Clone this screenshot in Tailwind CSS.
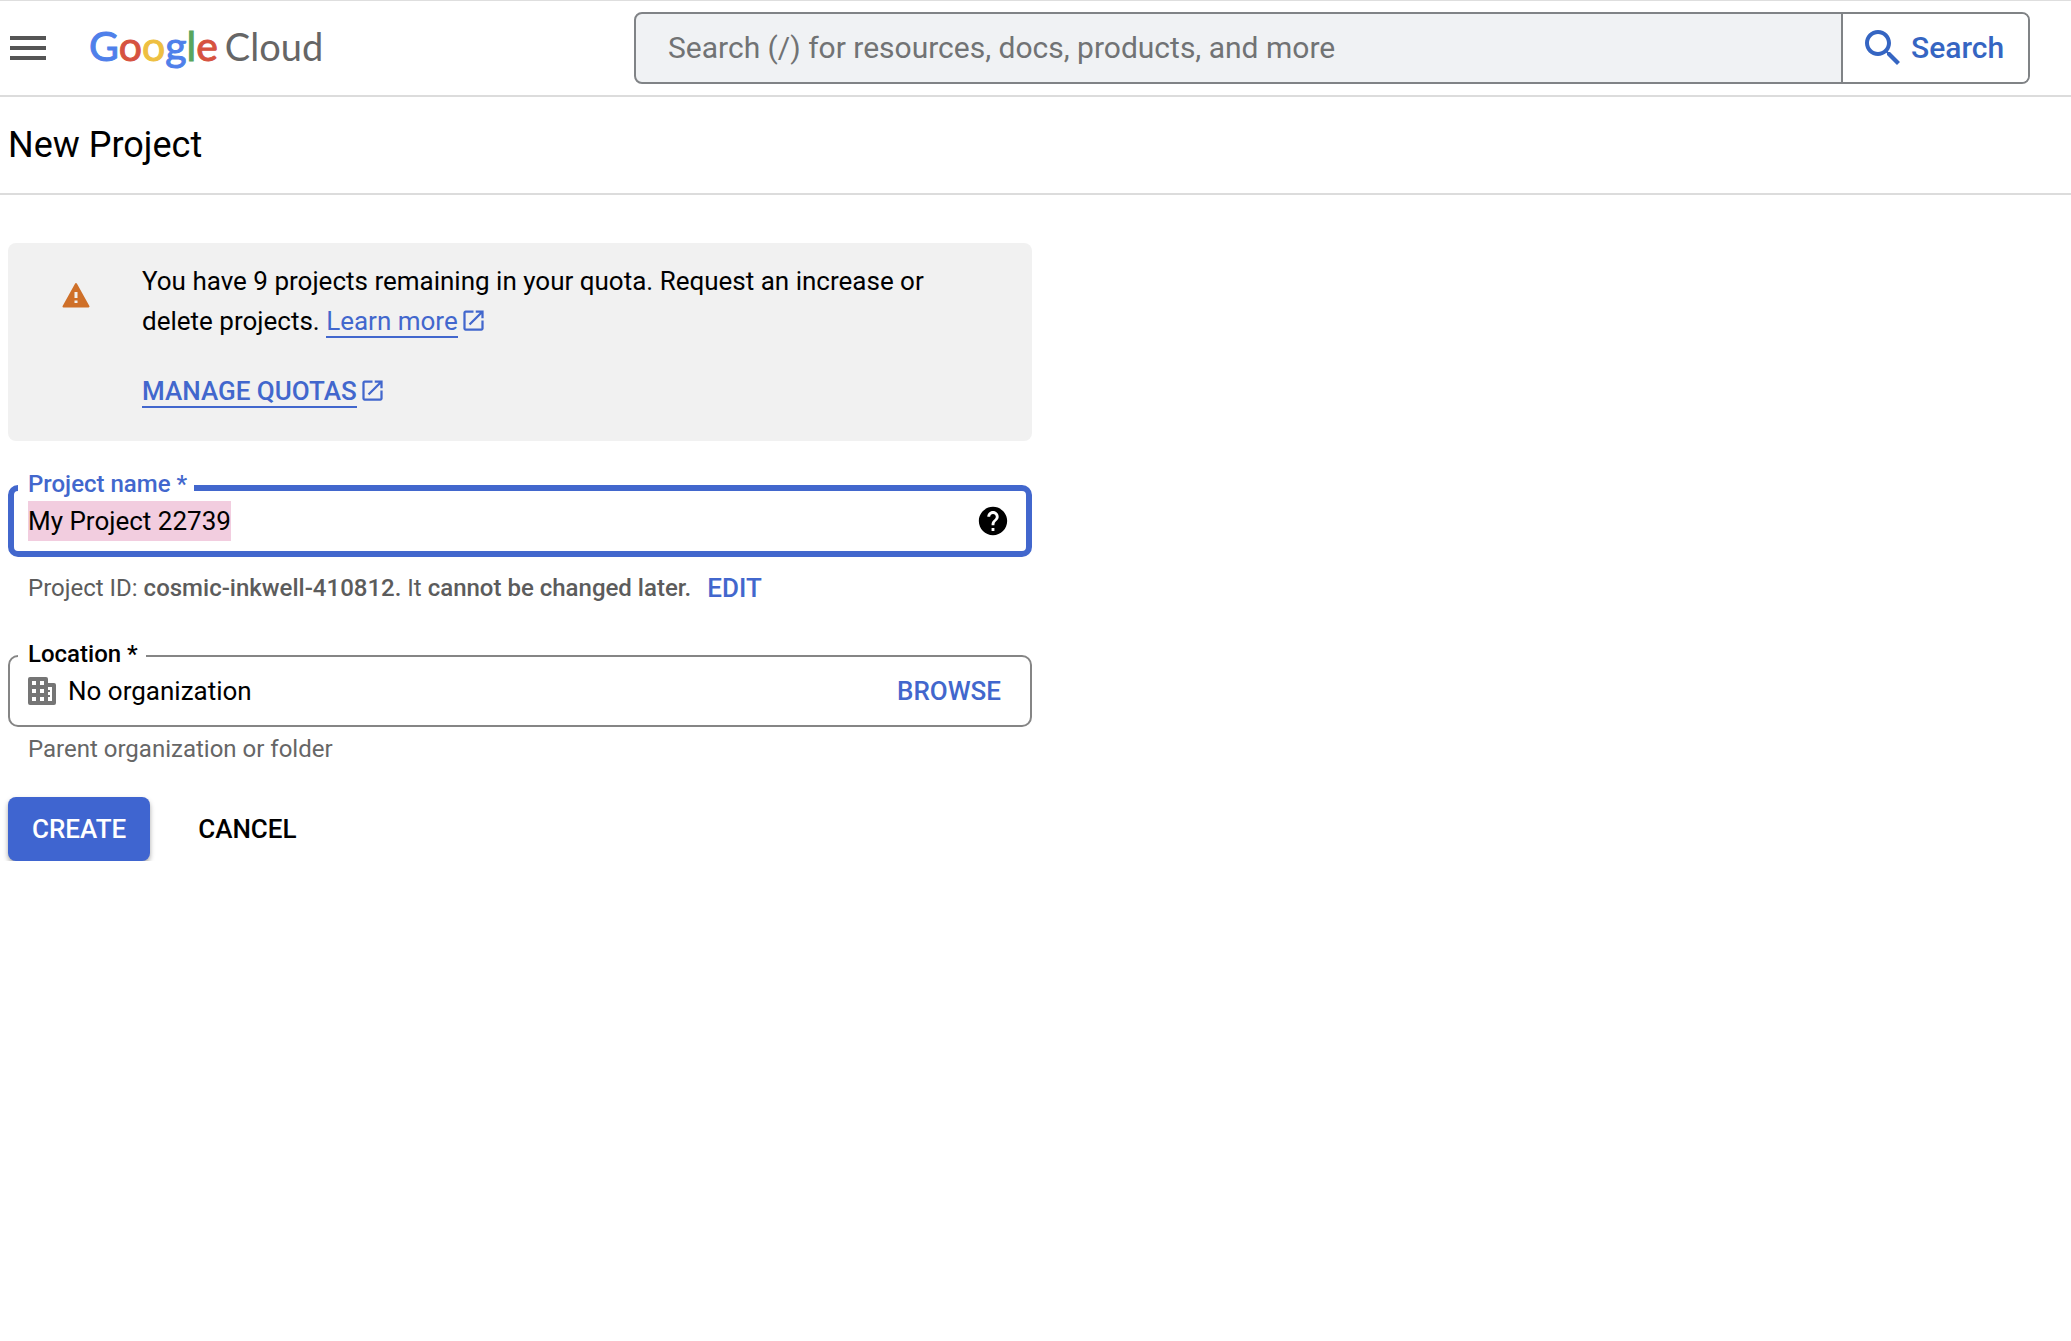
<!DOCTYPE html>
<html lang="en">
  <head>
    <meta charset="UTF-8" />
    <meta name="viewport" content="width=device-width, initial-scale=1.0" />
    <title>New Project – Google Cloud</title>
    <script src="https://cdn.jsdelivr.net/npm/@tailwindcss/browser@4"></script>
  </head>

  <body class="bg-white font-[Roboto,sans-serif] text-[26px] leading-10 text-black">
    <!-- Top bar -->
    <header
      class="flex h-[97px] items-center border-t border-b-2 border-t-[#dedede] border-b-[#dcdcdc] pr-[41px] pl-1"
    >
      <button type="button" aria-label="Navigation menu" class="shrink-0">
        <svg class="size-12" viewBox="0 0 24 24" fill="#555555">
          <path d="M3 18h18v-2H3v2zm0-5h18v-2H3v2zm0-7v2h18V6H3z" />
        </svg>
      </button>
      <a
        href="#"
        class="ml-[37px] flex shrink-0 items-baseline gap-[7px] pb-1 font-[Lato,sans-serif] text-[41px] leading-[48px]"
      >
        <span class="[-webkit-text-stroke:1px]"
          ><span class="text-[#4f80ea]">G</span
          ><span class="text-[#d65240]">o</span
          ><span class="text-[#eebf41]">o</span
          ><span class="text-[#4f80ea]">g</span
          ><span class="text-[#58a65c]">l</span
          ><span class="text-[#d65240]">e</span></span
        >
        <span class="text-[38px] text-[#666666]">Cloud</span>
      </a>

      <form
        class="ml-auto flex h-18 w-[1396px] overflow-hidden rounded-lg border-2 border-[#808386] bg-[#f0f2f4]"
        onsubmit="return false"
      >
        <input
          type="search"
          aria-label="Search"
          placeholder="Search (/) for resources, docs, products, and more"
          class="min-w-0 flex-1 px-8 text-[30px] outline-none placeholder:text-[#717374]"
        />
        <button
          type="submit"
          class="flex w-[187px] items-center gap-1 border-l-2 border-[#808386] bg-white pl-4 text-[30px] font-medium text-[#3565c2]"
        >
          <svg class="size-12" viewBox="0 0 24 24" fill="currentColor">
            <path
              d="M15.5 14h-.79l-.28-.27C15.41 12.59 16 11.11 16 9.5 16 5.91 13.09 3 9.5 3S3 5.91 3 9.5 5.91 16 9.5 16c1.61 0 3.09-.59 4.23-1.57l.27.28v.79l5 4.99L20.49 19l-4.99-5zm-6 0C7.01 14 5 11.99 5 9.5S7.01 5 9.5 5 14 7.01 14 9.5 11.99 14 9.5 14z"
            />
          </svg>
          Search
        </button>
      </form>
    </header>

    <div class="flex h-[98px] items-center border-b-2 border-[#dcdcdc] px-2">
      <h1 class="text-[36px]">New Project</h1>
    </div>

    <main class="max-w-[1040px] px-2 pt-12">
      <!-- Quota notice -->
      <section class="flex rounded-lg bg-[#f1f1f1] pt-[18px] pr-20 pb-[30px]">
        <svg
          class="mt-[19px] mr-[52px] ml-[54px] size-7 shrink-0"
          viewBox="0 0 28 28"
        >
          <path
            d="M14 4 26.500 26.500H1.500z"
            fill="#cf7029"
            stroke="#cf7029"
            stroke-width="2"
            stroke-linejoin="round"
          />
          <path d="M12.500 12h3v6h-3zm0 8.500h3v2.500h-3z" fill="#f1f1f1" />
        </svg>
        <div>
          <p>
            You have 9 projects remaining in your quota. Request an increase or
            delete projects.
            <a href="#" class="whitespace-nowrap text-[#4267cd]"
              ><span class="border-b-2">Learn more</span
              ><svg
                class="ml-0.5 inline size-[27px] align-[-4px]"
                viewBox="0 0 24 24"
                fill="currentColor"
              >
                <path
                  d="M19 19H5V5h7V3H5c-1.11 0-2 .9-2 2v14c0 1.1.89 2 2 2h14c1.1 0 2-.9 2-2v-7h-2v7zM14 3v2h3.59l-9.83 9.83 1.41 1.41L19 6.41V10h2V3h-7z"
                />
              </svg></a>
          </p>
          <p class="mt-[30px]">
            <a href="#" class="whitespace-nowrap font-medium text-[#4267cd]"
              ><span class="border-b-2">MANAGE QUOTAS</span
              ><svg
                class="ml-0.5 inline size-[27px] align-[-4px]"
                viewBox="0 0 24 24"
                fill="currentColor"
              >
                <path
                  d="M19 19H5V5h7V3H5c-1.11 0-2 .9-2 2v14c0 1.1.89 2 2 2h14c1.1 0 2-.9 2-2v-7h-2v7zM14 3v2h3.59l-9.83 9.83 1.41 1.41L19 6.41V10h2V3h-7z"
                />
              </svg></a>
          </p>
        </div>
      </section>

      <form onsubmit="return false">
        <!-- Project name -->
        <div
          class="relative mt-11 flex h-18 items-center rounded-[10px] border-6 border-[#4267cd] pr-4 pl-[14px]"
        >
          <label
            for="projectName"
            class="absolute -top-[21px] left-1 bg-white pr-[7px] pl-[10px] text-[24px] leading-7 font-medium text-[#4267cd]"
            >Project name *</label
          >
          <input
            type="text"
            id="projectName"
            value="My Project 22739"
            class="h-10 min-w-0 flex-1 leading-10 caret-transparent outline-none selection:bg-[#f2cddf] selection:text-black"
          />
          <button type="button" aria-label="Help">
            <svg class="size-[34px]" viewBox="0 0 24 24">
              <path
                d="M12 2C6.48 2 2 6.48 2 12s4.48 10 10 10 10-4.48 10-10S17.52 2 12 2zm1 17h-2v-2h2v2zm2.07-7.75l-.9.92C13.45 12.9 13 13.5 13 15h-2v-.5c0-1.1.45-2.1 1.17-2.83l1.24-1.26c.37-.36.59-.86.59-1.41 0-1.1-.9-2-2-2s-2 .9-2 2H8c0-2.21 1.79-4 4-4s4 1.79 4 4c0 .88-.36 1.68-.93 2.25z"
              />
            </svg>
          </button>
        </div>
        <p class="mt-[11px] flex items-center gap-4 pl-5 text-[24px] text-[#5c5c5c]">
          <span
            >Project ID:
            <b class="font-medium">cosmic-inkwell-410812.</b> It
            <b class="font-medium">cannot be changed later.</b></span
          >
          <button type="button" class="text-[26px] font-medium text-[#4267cd]">
            EDIT
          </button>
        </p>

        <!-- Location -->
        <div
          class="relative mt-[47px] flex h-18 items-center rounded-[10px] border-2 border-[#858585] pr-[29px] pl-[18px]"
        >
          <label
            for="location"
            class="absolute -top-[17px] left-2 bg-white pr-2 pl-[10px] text-[24px] leading-7 font-medium"
            >Location *</label
          >
          <svg class="size-7" viewBox="0 0 28 28" fill="#757575">
            <path
              fill-rule="evenodd"
              d="M2 0h16a2 2 0 0 1 2 2v4h6a2 2 0 0 1 2 2v18a2 2 0 0 1-2 2H2a2 2 0 0 1-2-2V2a2 2 0 0 1 2-2zM4 4v4h4V4zM12 4v4h4V4zM4 12v4h4v-4zM12 12v4h4v-4zM4 20v4h4v-4zM12 20v4h4v-4zM20 10v3h2v2h-2v3h2v2h-2v4h4V10z"
            />
          </svg>
          <input
            type="text"
            id="location"
            value="No organization"
            readonly
            class="ml-3 h-10 min-w-0 flex-1 leading-10 outline-none"
          />
          <button type="button" class="font-medium text-[#4267cd]">
            BROWSE
          </button>
        </div>
        <p class="mt-0.5 pl-5 text-[24px] text-[#666666]">
          Parent organization or folder
        </p>

        <div class="mt-7 flex gap-6">
          <button
            type="submit"
            class="h-16 rounded-lg bg-[#3f65d0] px-6 font-medium text-white shadow-[0_3px_5px_rgba(0,0,0,0.35)]"
          >
            CREATE
          </button>
          <button type="button" class="h-16 px-6 font-medium">CANCEL</button>
        </div>
      </form>
    </main>

    <script>
      // Project name starts focused, with the suggested name selected
      var projectName = document.getElementById("projectName");
      projectName.focus();
      projectName.select();
    </script>
  </body>
</html>
